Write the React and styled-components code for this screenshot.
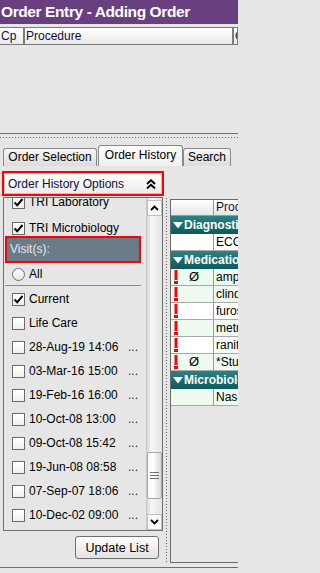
import React from 'react';
import styled, { createGlobalStyle } from 'styled-components';

const GlobalStyle = createGlobalStyle`
  html, body { margin: 0; padding: 0; background: #e6e6e6; }
  body { font-family: "Liberation Sans", Arial, sans-serif; font-size: 12px; color: #000; }
  * { box-sizing: border-box; }
`;

const visitRows = [
  { label: 'Current', checked: true },
  { label: 'Life Care' },
  { label: '28-Aug-19 14:06', more: true },
  { label: '03-Mar-16 15:00', more: true },
  { label: '19-Feb-16 16:00', more: true },
  { label: '10-Oct-08 13:00', more: true },
  { label: '09-Oct-08 15:42', more: true },
  { label: '19-Jun-08 08:58', more: true },
  { label: '07-Sep-07 18:06', more: true },
  { label: '10-Dec-02 09:00', more: true },
];

// right grid is cut by the window edge, only the visible part is kept
const orderRows = [
  { group: 'Diagnosti' },
  { text: 'ECG' },
  { group: 'Medicatio' },
  { text: 'amp', alert: true, none: true, tint: true },
  { text: 'clind', alert: true, tint: true },
  { text: 'furos', alert: true },
  { text: 'metr', alert: true, tint: true },
  { text: 'ranit', alert: true },
  { text: '*Stu', alert: true, none: true, tint: true },
  { group: 'Microbiolo' },
  { text: 'Nas', tint: true },
];

const Screen = styled.div`
  width: 238px;
  height: 573px;
  overflow: hidden;
  display: flex;
  flex-direction: column;
  background: #e6e6e6;
`;

const TitleBar = styled.div`
  height: 24px;
  flex-shrink: 0;
  background: #6a3f7f;
  color: #fff;
  font-weight: bold;
  font-size: 15.5px;
  letter-spacing: -0.4px;
  line-height: 24px;
  padding-left: 1px;
  white-space: nowrap;
`;

const TopPane = styled.div`
  height: 107px;
  flex-shrink: 0;
  margin-top: 3px;
  border-bottom: 1px solid #6e6e6e;
`;

const HeadRow = styled.div`
  display: flex;
  height: 18px;
  margin-left: -1px;
`;

const HeadCell = styled.div`
  flex-shrink: 0;
  width: ${(p) => p.w}px;
  border: 1px solid #7c7c7c;
  background: linear-gradient(#ffffff, #e9e9e9);
  color: #10103a;
  padding-left: 1px;
  line-height: 16px;
  white-space: nowrap;
  overflow: hidden;
`;

const HSplitter = styled.div`
  height: 11px;
  flex-shrink: 0;
  padding-top: 3px;
  &::after {
    content: '';
    display: block;
    height: 1px;
    background: repeating-linear-gradient(90deg, #6a6a6a 0 1px, transparent 1px 3px);
  }
`;

const TabStrip = styled.div`
  height: 21px;
  flex-shrink: 0;
  display: flex;
  align-items: flex-end;
  padding-left: 3px;
`;

const Tab = styled.div`
  flex-shrink: 0;
  height: ${(p) => (p.active ? 21 : 18)}px;
  width: ${(p) => p.w}px;
  margin-left: ${(p) => (p.active ? 1 : 0)}px;
  border: 1px solid #8a8a8a;
  border-bottom: none;
  border-radius: 3px 3px 0 0;
  background: ${(p) => (p.active ? 'linear-gradient(#fcfcfc, #f0f0f0)' : 'linear-gradient(#f6f6f6, #dcdcdc)')};
  font-size: 12px;
  line-height: ${(p) => (p.active ? 18 : 17)}px;
  text-align: center;
  white-space: nowrap;
`;

const TabBody = styled.div`
  flex: 1;
  display: flex;
  padding-top: 5px;
  padding-left: 2px;
  min-height: 0;
`;

const LeftCol = styled.div`
  flex-shrink: 0;
  width: 162px;
  display: flex;
  flex-direction: column;
`;

const OptionsHeader = styled.div`
  height: 25px;
  border: 2px solid #ff0000;
  flex-shrink: 0;
`;

const OptionsInner = styled.div`
  height: 100%;
  display: flex;
  align-items: center;
  justify-content: space-between;
  padding: 0 5px 0 3px;
  border: 1px solid #c4c4c4;
  border-radius: 2px;
  background: linear-gradient(#ffffff, #ececec);
  color: #10103a;
`;

const ListPanel = styled.div`
  margin-top: 1px;
  margin-left: 1px;
  width: 160px;
  height: 334px;
  flex-shrink: 0;
  border: 1px solid #707070;
  display: flex;
  overflow: hidden;
`;

const ListContent = styled.div`
  flex: 1;
  overflow: hidden;
`;

const Scrolled = styled.div`
  margin-top: ${(p) => -p.offset}px;
`;

const CheckRow = styled.div`
  height: ${(p) => p.h || 24}px;
  margin-bottom: ${(p) => p.gap || 0}px;
  display: flex;
  align-items: center;
  padding-left: 8px;
  gap: 4px;
  white-space: nowrap;
`;

const Box = styled.span`
  width: 13px;
  height: 13px;
  flex-shrink: 0;
  border: 1px solid #6a6a6a;
  background: linear-gradient(#ffffff, #f0f0f0);
  display: flex;
  align-items: center;
  justify-content: center;
`;

const Radio = styled(Box)`
  border-radius: 50%;
  border-color: #707070;
  background: linear-gradient(#ffffff, #e4e4e4);
`;

const DateText = styled.span`
  width: 95px;
`;

const More = styled.span`
  color: #1a1a3a;
`;

const VisitBar = styled.div`
  margin-left: 1px;
  width: 136px;
  height: 27px;
  border: 2px solid #ff0000;
  background: #6b7a87;
  color: #e6e8ea;
  padding-left: 3px;
  line-height: 23px;
`;

const Separator = styled.div`
  margin: 0 0 1px 1px;
  width: 136px;
  height: 1px;
  background: #8a8a8a;
`;

const ScrollBar = styled.div`
  width: 16px;
  flex-shrink: 0;
  display: flex;
  flex-direction: column;
  padding-top: 2px;
  background: linear-gradient(90deg, #d8d8d8, #f6f6f6 30%, #e4e4e4);
  border-left: 1px solid #c8c8c8;
`;

const ScrollBtn = styled.div`
  height: 16px;
  flex-shrink: 0;
  background: #fafafa;
  border: 1px solid #c0c0c0;
  display: flex;
  align-items: center;
  justify-content: center;
`;

const Track = styled.div`
  flex: 1;
  display: flex;
  flex-direction: column;
`;

const Thumb = styled.div`
  height: 47px;
  flex-shrink: 0;
  border: 1px solid #a8a8a8;
  border-radius: 2px;
  background: linear-gradient(90deg, #f8f8f8, #ffffff 40%, #d6d6d6);
  display: flex;
  align-items: center;
  justify-content: center;
`;

const UpdateButton = styled.button`
  align-self: flex-end;
  margin: 5px 5px 0 0;
  width: 84px;
  height: 23px;
  border: 1px solid #6e6e6e;
  border-radius: 3px;
  background: linear-gradient(#ffffff, #e2e2e2);
  font-family: "Liberation Sans", Arial, sans-serif;
  font-size: 12.5px;
  color: #000;
  padding: 0;
`;

const VSplitter = styled.div`
  flex-shrink: 0;
  width: 1px;
  margin: 27px 3px 4px 2px;
  background: repeating-linear-gradient(180deg, #6a6a6a 0 1px, transparent 1px 3px);
`;

const RightCol = styled.div`
  flex-shrink: 0;
  width: 68px;
  margin: 28px 0 4px 0;
  border: 1px solid #6a6a6a;
  border-right: none;
  overflow: hidden;
`;

const GridHead = styled.div`
  display: flex;
  height: 16px;
  background: linear-gradient(#ffffff, #e6e6e6);
  border-bottom: 1px solid #9a9a9a;
  line-height: 15px;
  color: #10103a;
`;

const FirstCell = styled.div`
  width: 43px;
  flex-shrink: 0;
  border-right: 1px solid #9a9a9a;
  display: flex;
  align-items: center;
  padding-left: 3px;
  gap: 11px;
`;

const TextCell = styled.div`
  padding-left: 2px;
  white-space: nowrap;
`;

const GroupRow = styled.div`
  height: 18px;
  display: flex;
  align-items: center;
  gap: 1px;
  padding-left: 2px;
  background: linear-gradient(#2c8383, #0c5a5a);
  color: #fff;
  font-weight: bold;
  font-size: 12px;
  white-space: nowrap;
`;

const GroupArrow = styled.svg`
  flex-shrink: 0;
`;

const DataRow = styled.div`
  height: 17px;
  display: flex;
  align-items: stretch;
  background: ${(p) => (p.tint ? '#eefaef' : '#ffffff')};
  border-bottom: 1px solid #a8a8a8;
  line-height: 16px;
`;

const NoneMark = styled.span`
  font-size: 13px;
  line-height: 16px;
`;

const StatusLine = styled.div`
  height: 6px;
  flex-shrink: 0;
  border-top: 1px solid #6e6e6e;
`;

const CheckMark = () => (
  <svg width="11" height="11" viewBox="0 0 11 11">
    <path d="M1.5 5.5 L4.2 8.3 L9.5 2" fill="none" stroke="#000" strokeWidth="2" />
  </svg>
);

const Chevron = ({ down }) => (
  <svg width="9" height="6" viewBox="0 0 9 6">
    <path d={down ? 'M1 1 L4.5 4.5 L8 1' : 'M1 5 L4.5 1.5 L8 5'} fill="none" stroke="#000" strokeWidth="1.8" />
  </svg>
);

const DoubleUp = () => (
  <svg width="10" height="10" viewBox="0 0 10 10">
    <path d="M1 5 L5 1.2 L9 5 M1 9.5 L5 5.7 L9 9.5" fill="none" stroke="#000" strokeWidth="1.9" />
  </svg>
);

const Grip = () => (
  <svg width="9" height="7" viewBox="0 0 9 7">
    <path d="M0 0.5 H9 M0 3.5 H9 M0 6.5 H9" stroke="#6e6e6e" strokeWidth="1" />
  </svg>
);

const Alert = () => (
  <svg width="4" height="14" viewBox="0 0 4 14">
    <rect x="0.5" y="0" width="3" height="10" fill="#ff0000" />
    <rect x="0" y="11" width="4" height="3" fill="#ff0000" />
  </svg>
);

const Triangle = () => (
  <GroupArrow width="10" height="7" viewBox="0 0 10 7">
    <path d="M0 0 H10 L5 6.5 Z" fill="#fff" />
  </GroupArrow>
);

const Check = ({ label, checked, h, gap }) => (
  <CheckRow h={h} gap={gap}>
    <Box>{checked && <CheckMark />}</Box>
    <span>{label}</span>
  </CheckRow>
);

const App = () => {
  const thumbTop = 236;

  return (
    <Screen>
      <GlobalStyle />
      <TitleBar>Order Entry - Adding Order</TitleBar>

      <TopPane>
        <HeadRow>
          <HeadCell w={25}>Cp</HeadCell>
          <HeadCell w={209}>Procedure</HeadCell>
          <HeadCell w={5}>C</HeadCell>
        </HeadRow>
      </TopPane>

      <HSplitter />

      <TabStrip>
        <Tab w={94}>Order Selection</Tab>
        <Tab w={85} active>
          Order History
        </Tab>
        <Tab w={48}>Search</Tab>
      </TabStrip>

      <TabBody>
        <LeftCol>
          <OptionsHeader>
            <OptionsInner>
              <span>Order History Options</span>
              <DoubleUp />
            </OptionsInner>
          </OptionsHeader>

          <ListPanel>
            <ListContent>
              <Scrolled offset={4}>
                <Check label="TRI Laboratory" checked h={16} gap={10} />
                <Check label="TRI Microbiology" checked h={16} />
                <VisitBar>Visit(s):</VisitBar>
                <CheckRow h={22}>
                  <Radio />
                  <span>All</span>
                </CheckRow>
                <Separator />
                {visitRows.map((row) => (
                  <CheckRow key={row.label}>
                    <Box>{row.checked && <CheckMark />}</Box>
                    <DateText>{row.label}</DateText>
                    {row.more && <More>...</More>}
                  </CheckRow>
                ))}
              </Scrolled>
            </ListContent>
            <ScrollBar>
              <ScrollBtn>
                <Chevron />
              </ScrollBtn>
              <Track>
                <Thumb style={{ marginTop: thumbTop }}>
                  <Grip />
                </Thumb>
              </Track>
              <ScrollBtn>
                <Chevron down />
              </ScrollBtn>
            </ScrollBar>
          </ListPanel>

          <UpdateButton>Update List</UpdateButton>
        </LeftCol>

        <VSplitter />

        <RightCol>
          <GridHead>
            <FirstCell />
            <TextCell>Proc</TextCell>
          </GridHead>
          {orderRows.map((row, i) =>
            row.group ? (
              <GroupRow key={i}>
                <Triangle />
                {row.group}
              </GroupRow>
            ) : (
              <DataRow key={i} tint={row.tint}>
                <FirstCell>
                  {row.alert && <Alert />}
                  {row.none && <NoneMark>Ø</NoneMark>}
                </FirstCell>
                <TextCell>{row.text}</TextCell>
              </DataRow>
            )
          )}
        </RightCol>
      </TabBody>

      <StatusLine />
    </Screen>
  );
};

export default App;
